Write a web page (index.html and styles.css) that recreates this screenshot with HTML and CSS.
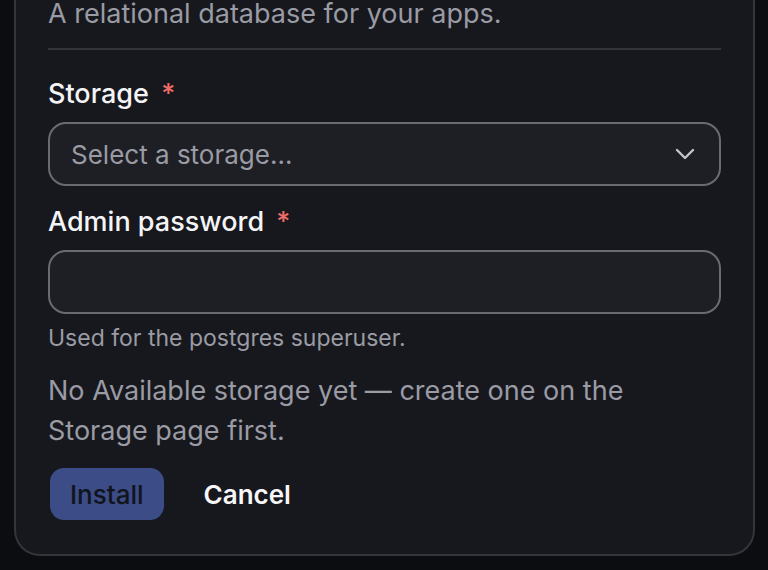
FILE: index.html
```html
<!DOCTYPE html>
<html lang="en">
<head>
<meta charset="utf-8">
<title>Install Postgres</title>
<link rel="stylesheet" href="styles.css">
</head>
<body>
<div class="card">
  <p class="desc">A relational database for your apps.</p>
  <hr class="divider">
  <form class="form">
    <div class="field">
      <label class="label">Storage <span class="req">*</span></label>
      <div class="select">
        <span class="placeholder">Select a storage…</span>
        <svg class="chev" width="20" height="12" viewBox="0 0 20 12" fill="none"><path d="M2 2l8 8 8-8" stroke="#c4c5cc" stroke-width="2.4" stroke-linecap="round" stroke-linejoin="round"/></svg>
      </div>
    </div>
    <div class="field">
      <label class="label">Admin password <span class="req">*</span></label>
      <div class="input"></div>
      <p class="hint">Used for the postgres superuser.</p>
    </div>
    <p class="notice">No Available storage yet — create one on the Storage page first.</p>
    <div class="actions">
      <button type="button" class="btn-primary">Install</button>
      <button type="button" class="btn-ghost">Cancel</button>
    </div>
  </form>
</div>
</body>
</html>
```
FILE: styles.css
```css
html, body {
  margin: 0;
  padding: 0;
  background: #0c0d10;
  height: 100%;
  overflow: hidden;
}
body {
  font-family: Inter, "Noto Sans", sans-serif;
  padding: 0 13px 0 14px;
}
.card {
  margin-top: -30px;
  background: #17181d;
  border: 2px solid #34353b;
  border-top: none;
  border-radius: 0 0 26px 26px;
  padding: 31px 32px 34px 32px;
}
.desc {
  margin: 0;
  font-size: 27px;
  line-height: 26px;
  color: #9a9ba4;
}
.divider {
  border: none;
  border-top: 2px solid #34353b;
  margin: 21px 0 26px;
}
.form {
  display: flex;
  flex-direction: column;
}
.field {
  display: flex;
  flex-direction: column;
}
.label {
  font-size: 27px;
  font-weight: 500;
  color: #f4f4f6;
  line-height: 36px;
  margin-bottom: 10px;
}
.req {
  color: #ef6b67;
  margin-left: 5px;
}
.select, .input {
  height: 64px;
  box-sizing: border-box;
  border: 2px solid #6a6b72;
  border-radius: 18px;
  background: #1e1f24;
  display: flex;
  align-items: center;
  justify-content: space-between;
  padding: 0 24px 0 21px;
}
.placeholder {
  font-size: 26px;
  color: #9a9ba4;
}
.field + .field { margin-top: 18px; }
.hint {
  margin: 10px 0 0;
  font-size: 23px;
  color: #9a9ba4;
}
.notice {
  margin: 19px 0 0;
  font-size: 27px;
  line-height: 40px;
  color: #9a9ba4;
  max-width: 620px;
}
.actions {
  display: flex;
  align-items: center;
  gap: 40px;
  margin-top: 17px;
  padding-left: 2px;
}
.btn-primary {
  font-family: inherit;
  font-size: 26px;
  font-weight: 500;
  color: #11141d;
  background: #3b4c86;
  border: none;
  border-radius: 14px;
  height: 52px;
  padding: 0 20px;
}
.btn-ghost {
  font-family: inherit;
  font-size: 26px;
  font-weight: 600;
  color: #f7f7f9;
  background: none;
  border: none;
  padding: 0;
}
```
